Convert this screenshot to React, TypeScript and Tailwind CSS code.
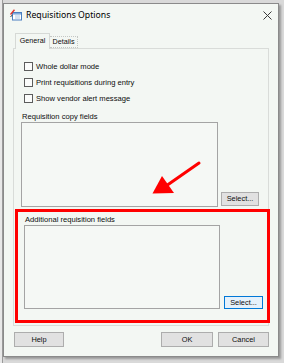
export default function App() {
  const checks = ["Whole dollar mode", "Print requisitions during entry", "Show vendor alert message"];
  return (
    <div className="relative w-[284px] h-[363px] bg-[#d9d9d9] overflow-hidden pl-[3px] pt-[3px] font-['Liberation_Sans',Arial,sans-serif] text-[#0d0d0d]">
      {/* behind-app sliver */}
      <div className="absolute left-0 top-0 w-[3px] h-[363px] bg-[#e8e8e8] border-r border-[#9a9a9a]" />
      <div className="relative w-[276px] h-[354px] border border-[#8a8a8a] bg-[#f3f7f3] flex flex-col shadow-[2px_2px_2px_rgba(0,0,0,0.3)]">
        {/* Title bar */}
        <div className="h-[22px] flex items-center pl-[6px] pr-[5px] shrink-0">
          <svg width="12" height="12" viewBox="0 0 12 12" className="shrink-0">
            <rect x="2.5" y="3.5" width="9" height="7.5" fill="#ffffff" stroke="#4a7fc1" />
            <rect x="3" y="4" width="8" height="1.6" fill="#7fa9dd" />
            <line x1="5" y1="7" x2="10" y2="7" stroke="#9ab8de" strokeWidth="0.8" />
            <line x1="5" y1="9" x2="10" y2="9" stroke="#9ab8de" strokeWidth="0.8" />
            <line x1="0.5" y1="5.5" x2="4.5" y2="0.8" stroke="#e0322a" strokeWidth="1.4" />
            <line x1="0.5" y1="8" x2="2.2" y2="6" stroke="#333" strokeWidth="0.9" />
          </svg>
          <span className="ml-[4px] text-[8.7px] leading-none font-['Noto_Sans',sans-serif] text-[#000]">Requisitions Options</span>
          <svg width="9" height="9" viewBox="0 0 9 9" className="ml-auto mr-[1px]">
            <path d="M0.5 0.5 L8.5 8.5 M8.5 0.5 L0.5 8.5" stroke="#3a3a3a" strokeWidth="1" />
          </svg>
        </div>
        {/* Tabs */}
        <div className="mt-[7px] pl-[11px] flex items-end h-[16px] relative z-10 text-[7.2px]">
          <div className="w-[35px] h-[16px] border border-b-0 border-[#d6d9d6] bg-[#f3f7f3] flex items-center justify-center pb-[1px]">
            General
          </div>
          <div className="w-[28px] h-[12px] border border-l-0 border-dotted border-[#c4c7c4] bg-[#f3f7f3] flex items-center justify-center pt-[1px] mb-[1px]">
            Details
          </div>
        </div>
        {/* Panel */}
        <div className="ml-[9px] -mt-[1px] w-[256px] h-[278px] border border-[#d9dcd9] flex flex-col text-[7.6px] leading-[9px] shrink-0">
          <div className="mt-[13px] pl-[10px] flex flex-col gap-[7px]">
            {checks.map((c) => (
              <div key={c} className="flex items-center h-[9px]">
                <div className="w-[9px] h-[9px] border border-[#5c5c5c] bg-[#fbfcfb]" />
                <span className="ml-[3px]">{c}</span>
              </div>
            ))}
          </div>
          <div className="mt-[9px] pl-[8px] h-[9px]">Requisition copy fields</div>
          <div className="mt-[1px] flex items-end pl-[7px]">
            <div className="w-[197px] h-[85px] border border-[#a4a4a4] bg-[#f5f8f5]" />
            <button className="ml-[3px] mb-[1px] w-[38px] h-[14px] border border-[#adadad] bg-[#e1e1e1] text-[7.4px] leading-none flex items-center justify-center">
              Select...
            </button>
          </div>
          <div className="mt-[2px] ml-[1px] w-[255px] h-[114px] border-[3px] border-[#ff0000] flex flex-col shrink-0">
            <div className="mt-[3px] pl-[7px] h-[9px]">Additional requisition fields</div>
            <div className="mt-[1px] flex items-end pl-[6px]">
              <div className="w-[196px] h-[84px] border border-[#a4a4a4] bg-[#f5f8f5]" />
              <button className="ml-[4px] w-[39px] h-[13px] border border-[#0078d7] bg-[#e5f1fb] text-[7.4px] leading-none flex items-center justify-center">
                Select...
              </button>
            </div>
          </div>
        </div>
        {/* Bottom buttons */}
        <div className="mt-[6px] flex items-center pl-[10px] text-[7.4px]">
          <button className="w-[50px] h-[15px] border border-[#adadad] bg-[#e1e1e1] leading-none flex items-center justify-center">Help</button>
          <button className="ml-[97px] w-[52px] h-[15px] border border-[#adadad] bg-[#e1e1e1] leading-none flex items-center justify-center">OK</button>
          <button className="ml-[5px] w-[51px] h-[15px] border border-[#adadad] bg-[#e1e1e1] leading-none flex items-center justify-center">Cancel</button>
        </div>
      </div>
      {/* Red arrow annotation */}
      <svg className="absolute left-0 top-0 pointer-events-none" width="284" height="363" viewBox="0 0 284 363">
        <line x1="199" y1="163" x2="166" y2="186" stroke="#ff0000" strokeWidth="3" strokeLinecap="round" />
        <polygon points="152.5,193.5 162,176 174,193" fill="#ff0000" />
      </svg>
    </div>
  );
}
